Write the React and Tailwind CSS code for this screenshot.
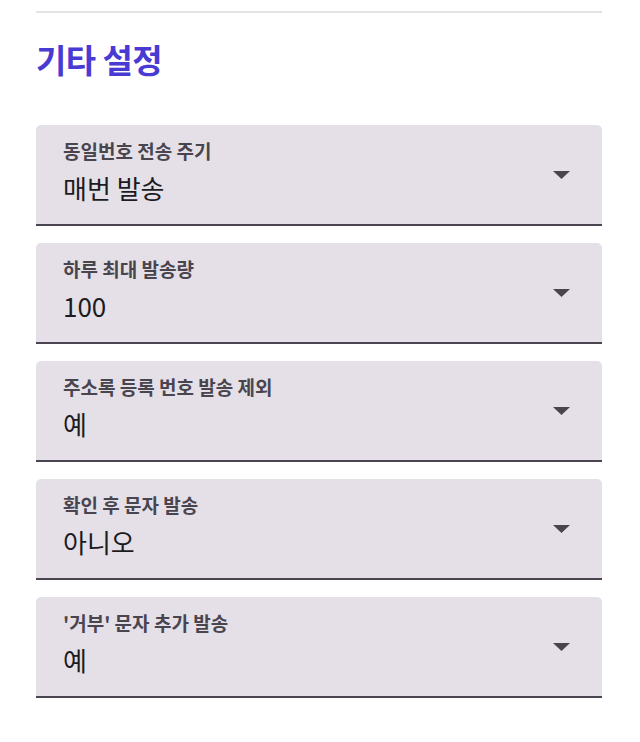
import React from "react";

const fields = [
  { label: "동일번호 전송 주기", value: "매번 발송" },
  { label: "하루 최대 발송량", value: "100" },
  { label: "주소록 등록 번호 발송 제외", value: "예" },
  { label: "확인 후 문자 발송", value: "아니오" },
  { label: "'거부' 문자 추가 발송", value: "예" },
];

function SelectField({ label, value }) {
  return (
    <div className="h-[101px] rounded-t-[5px] bg-[#e5e0e7] border-b-2 border-[#4a4550] pl-[27px] pr-[32px] flex justify-between">
      <div className="flex flex-col pt-[14px]">
        <span className="text-[19px] leading-[24px] font-semibold text-[#49454f]">{label}</span>
        <span className="text-[26px] leading-[32px] mt-[9px] text-[#1c1b1f]">{value}</span>
      </div>
      <svg width="17" height="8" viewBox="0 0 17 8" className="self-center">
        <path d="M0 0 L17 0 L8.5 8 Z" fill="#49454f" />
      </svg>
    </div>
  );
}

export default function App() {
  return (
    <div
      className="min-h-screen bg-white pl-9 pr-[38px]"
      style={{ fontFamily: '"Noto Sans CJK KR", "Noto Sans", sans-serif' }}
    >
      <div className="pt-[11px]">
        <div className="h-[2px] bg-[#e3e3e3]" />
      </div>
      <h2 className="mt-[26px] text-[33px] leading-[40px] font-bold text-[#4a3ad4] tracking-[-0.6px]">
        기타 설정
      </h2>
      <div className="mt-[46px] flex flex-col gap-[17px]">
        {fields.map((f) => (
          <SelectField key={f.label} label={f.label} value={f.value} />
        ))}
      </div>
    </div>
  );
}
